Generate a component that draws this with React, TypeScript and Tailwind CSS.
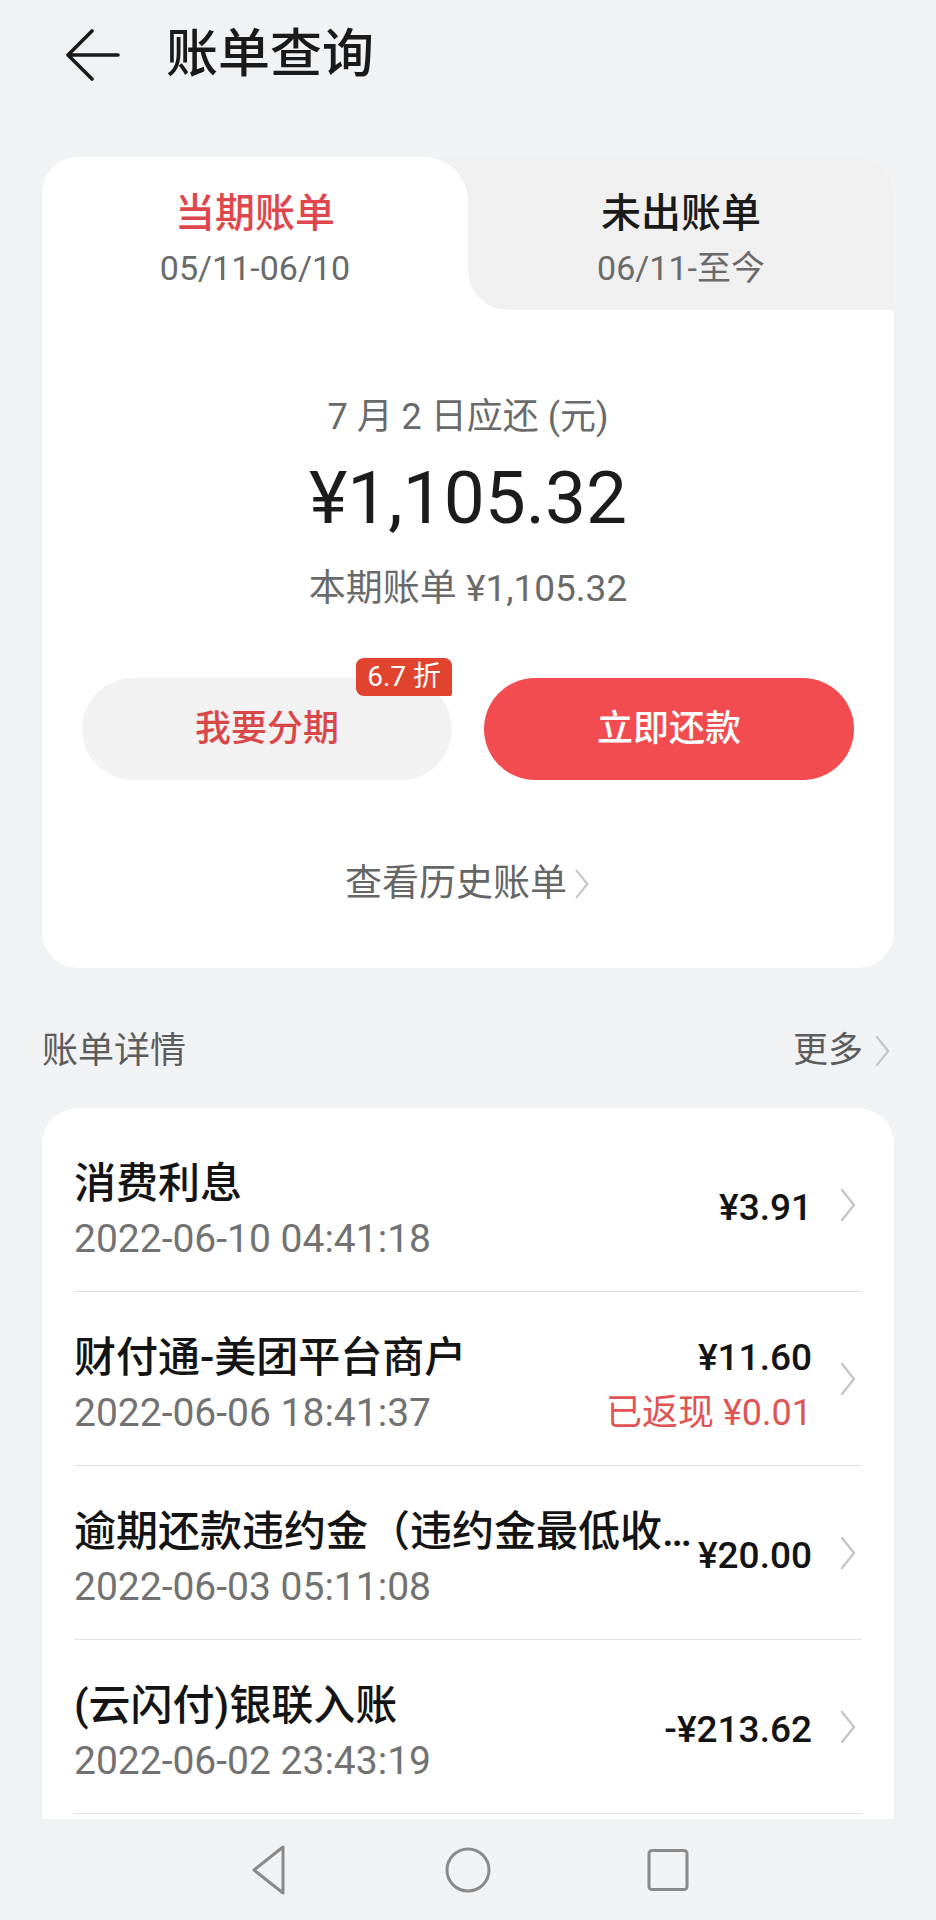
import React from "react";

type Bill = {
  title: string;
  time: string;
  amount: string;
  cashback?: string;
};

const bills: Bill[] = [
  { title: "消费利息", time: "2022-06-10 04:41:18", amount: "¥3.91" },
  {
    title: "财付通-美团平台商户",
    time: "2022-06-06 18:41:37",
    amount: "¥11.60",
    cashback: "已返现 ¥0.01",
  },
  {
    title: "逾期还款违约金（违约金最低收…",
    time: "2022-06-03 05:11:08",
    amount: "¥20.00",
  },
  { title: "(云闪付)银联入账", time: "2022-06-02 23:43:19", amount: "-¥213.62" },
];

const Chevron = ({ className = "" }: { className?: string }) => (
  <svg viewBox="0 0 20 36" className={className} fill="none">
    <path
      d="M4 3 L16 18 L4 33"
      stroke="#c6c6c6"
      strokeWidth="2.4"
      strokeLinecap="round"
      strokeLinejoin="round"
    />
  </svg>
);

const BillRow = ({ bill }: { bill: Bill }) => (
  <div className="flex h-[174px] items-center border-b border-[#e3e3e3]">
    <div className="min-w-0 flex-1 pt-[12px]">
      <div className="whitespace-nowrap text-[42px] leading-[50px] font-medium text-[#141414]">
        {bill.title}
      </div>
      <div className="mt-[7px] text-[39px] leading-[46px] text-[#727272]">
        {bill.time}
      </div>
    </div>
    <div
      className={
        bill.cashback
          ? "ml-[4px] shrink-0 pt-[12px] text-right"
          : "ml-[4px] shrink-0 pt-[6px] text-right"
      }
    >
      <div className="text-[37px] leading-[50px] font-medium text-[#141414]">
        {bill.amount}
      </div>
      {bill.cashback && (
        <div className="mt-[7px] text-[36px] leading-[46px] text-[#e05454]">
          {bill.cashback}
        </div>
      )}
    </div>
    <Chevron className="ml-[26px] mr-[4px] h-[36px] w-[20px] shrink-0" />
  </div>
);

const App = () => {
  return (
    <div className="flex h-[1920px] w-[936px] flex-col overflow-hidden bg-[#f1f2f4] font-[family-name:Roboto,'Noto_Sans_CJK_SC',sans-serif]">
      {/* header */}
      <header className="flex h-[110px] shrink-0 items-center pl-[66px]">
        <svg viewBox="0 0 54 52" className="h-[52px] w-[54px]" fill="none">
          <path
            d="M2 26 L52 26 M2 26 L26 2 M2 26 L26 50"
            stroke="#1a1a1a"
            strokeWidth="3.6"
            strokeLinecap="round"
            strokeLinejoin="round"
          />
        </svg>
        <h1 className="ml-[46px] text-[52px] leading-[60px] font-medium text-[#1a1a1a]">
          账单查询
        </h1>
      </header>

      <main className="flex-1 overflow-hidden px-[42px] pt-[47px]">
        {/* current bill card */}
        <section className="overflow-hidden rounded-[36px] bg-white">
          <div className="grid grid-cols-2 bg-[#f0f0f1]">
            <div className="rounded-tr-[44px] bg-white pt-[32px] pb-[22px] text-center">
              <div className="text-[40px] leading-[50px] font-medium text-[#e0474c]">
                当期账单
              </div>
              <div className="mt-[9px] text-[34px] leading-[40px] text-[#6a6a6a]">
                05/11-06/10
              </div>
            </div>
            <div className="bg-white">
              <div className="h-full rounded-bl-[40px] bg-[#f0f0f1] pt-[32px] pb-[22px] text-center">
                <div className="text-[40px] leading-[50px] font-medium text-[#1a1a1a]">
                  未出账单
                </div>
                <div className="mt-[9px] text-[34px] leading-[40px] text-[#6a6a6a]">
                  06/11-至今
                </div>
              </div>
            </div>
          </div>

          <div className="px-[40px] pt-[85px] pb-[62px] text-center">
            <div className="text-[36px] leading-[44px] text-[#6a6a6a]">
              7 月 2 日应还 (元)
            </div>
            <div className="mt-[15px] text-[73px] leading-[88px] text-[#1c1c1c]">
              ¥1,105.32
            </div>
            <div className="mt-[27px] text-[37px] leading-[40px] text-[#6a6a6a]">
              本期账单 ¥1,105.32
            </div>

            <div className="mt-[69px] grid grid-cols-2 gap-[32px]">
              <button className="relative h-[102px] rounded-full bg-[#f2f2f2] text-[36px] font-medium text-[#d94848]">
                我要分期
                <span className="absolute top-[-20px] right-0 rounded-[8px] rounded-br-[2px] bg-[#e0442f] px-[11px] text-[28px] leading-[38px] font-normal text-white">
                  6.7 折
                </span>
              </button>
              <button className="h-[102px] rounded-full bg-[#f24c50] text-[36px] font-medium text-white">
                立即还款
              </button>
            </div>

            <div className="mt-[82px] flex items-center justify-center">
              <span className="text-[37px] leading-[44px] text-[#666]">
                查看历史账单
              </span>
              <Chevron className="ml-[6px] h-[32px] w-[18px]" />
            </div>
          </div>
        </section>

        {/* detail heading */}
        <div className="mt-[61px] flex items-center justify-between">
          <span className="text-[36px] leading-[44px] text-[#5c5c5c]">
            账单详情
          </span>
          <span className="flex items-center">
            <span className="text-[35px] leading-[44px] text-[#5c5c5c]">
              更多
            </span>
            <Chevron className="ml-[10px] mr-[2px] h-[34px] w-[19px]" />
          </span>
        </div>

        {/* bill list */}
        <section className="mt-[35px] rounded-t-[36px] bg-white px-[32px] pt-[10px] pb-[40px]">
          {bills.map((bill, i) => (
            <BillRow key={i} bill={bill} />
          ))}
        </section>
      </main>

      {/* system nav bar */}
      <nav className="flex h-[101px] shrink-0 items-center justify-center">
        <div className="flex w-[200px] justify-center">
          <svg viewBox="0 0 40 52" className="h-[52px] w-[40px]" fill="none">
            <path
              d="M35 3 L35 49 L6 26 Z"
              stroke="#8a8a8a"
              strokeWidth="3"
              strokeLinejoin="round"
            />
          </svg>
        </div>
        <div className="flex w-[200px] justify-center">
          <svg viewBox="0 0 48 48" className="h-[48px] w-[48px]" fill="none">
            <circle cx="24" cy="24" r="21" stroke="#8a8a8a" strokeWidth="3" />
          </svg>
        </div>
        <div className="flex w-[200px] justify-center">
          <svg viewBox="0 0 44 44" className="h-[44px] w-[44px]" fill="none">
            <rect
              x="3"
              y="2.5"
              width="38"
              height="39"
              rx="3"
              stroke="#8a8a8a"
              strokeWidth="3"
            />
          </svg>
        </div>
      </nav>
    </div>
  );
};

export default App;
